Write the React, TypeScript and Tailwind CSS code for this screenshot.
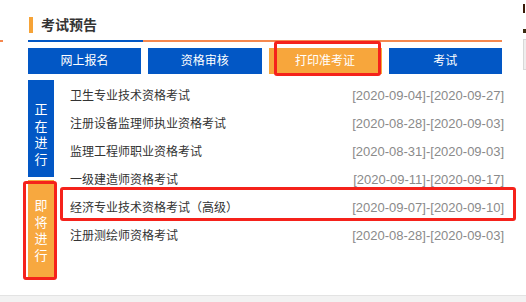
const tabs = ['网上报名', '资格审核', '打印准考证', '考试']

const exams = [
  { name: '卫生专业技术资格考试', date: '[2020-09-04]-[2020-09-27]' },
  { name: '注册设备监理师执业资格考试', date: '[2020-08-28]-[2020-09-03]' },
  { name: '监理工程师职业资格考试', date: '[2020-08-31]-[2020-09-03]' },
  { name: '一级建造师资格考试', date: '[2020-09-11]-[2020-09-17]' },
  { name: '经济专业技术资格考试（高级）', date: '[2020-09-07]-[2020-09-10]' },
  { name: '注册测绘师资格考试', date: '[2020-08-28]-[2020-09-03]' },
]

function VerticalTab({ label, color, pad }: { label: string; color: string; pad: string }) {
  return (
    <div className={`h-[97px] flex flex-col items-center ${color} ${pad}`}>
      {label.split('').map((ch, i) => (
        <span key={i} className="text-[13px] leading-[16.5px] text-white">
          {ch}
        </span>
      ))}
    </div>
  )
}

export default function App() {
  return (
    <div className="relative w-[526px] h-[302px] flex flex-col bg-white overflow-hidden font-['Liberation_Sans','Noto_Sans_CJK_SC',sans-serif]">
      <div className="pl-[28px] pr-[24px] pt-[17px]">
        {/* title */}
        <div className="flex items-center h-[16px]">
          <div className="ml-[1px] w-[4px] h-[16px] bg-[#f6a337]" />
          <span className="ml-[8px] text-[14px] leading-[16px] font-bold text-[#333]">考试预告</span>
        </div>
        <div className="mt-[7px] flex h-[2px]">
          <div className="w-[115px] bg-[#0257c5]" />
          <div className="flex-1 bg-[#f5884f]" />
        </div>

        {/* step buttons */}
        <div className="mt-[6px] grid grid-cols-4 gap-[7px]">
          {tabs.map((t, i) => (
            <div
              key={t}
              className={`h-[26px] flex items-center justify-center text-[12px] text-white ${
                i === 2 ? 'bg-[#f7a63c]' : 'bg-[#0257c5]'
              }`}
            >
              {t}
            </div>
          ))}
        </div>

        {/* list */}
        <div className="mt-[6px] flex">
          <div className="w-[26px] flex flex-col">
            <VerticalTab label="正在进行" color="bg-[#0257c5]" pad="pt-[22px]" />
            <div className="mt-[3px]">
              <VerticalTab label="即将进行" color="bg-[#f7a83f]" pad="pt-[18px]" />
            </div>
          </div>
          <div className="flex-1 pl-[16px] pt-[2px] -mr-[2px]">
            {exams.map((e) => (
              <div key={e.name} className="h-[28px] flex items-center justify-between">
                <span className="text-[12px] text-[#333]">{e.name}</span>
                <span className="text-[13px] text-[#8a8a8a]">{e.date}</span>
              </div>
            ))}
          </div>
        </div>
      </div>

      {/* bottom strip */}
      <div className="mt-auto h-[7px] border-t border-[#e3e3e3] bg-[#f2f2f2]" />

      {/* edge fragments */}
      <div className="absolute left-0 top-[40px] w-[3px] h-[2px] bg-[#f5884f]" />
      <div className="absolute left-[523px] top-[4px] w-[2px] h-[9px] bg-[#3a1a08]" />
      <div className="absolute left-[523px] top-[29px] w-[3px] h-[4px] bg-[#3a2a10]" />
      <div className="absolute left-[523px] top-[39px] w-[4px] h-[31px] border border-[#d8d8d8] bg-[#eeeeee]" />

      {/* red annotation boxes */}
      <div className="absolute left-[274px] top-[41px] w-[107px] h-[35px] border-[3px] border-[#f5221b] rounded-[3px]" />
      <div className="absolute left-[23px] top-[181px] w-[34px] h-[99px] border-[3px] border-[#f5221b] rounded-[3px]" />
      <div className="absolute left-[60px] top-[187px] w-[456px] h-[34px] border-[3px] border-[#f5221b] rounded-[3px]" />
    </div>
  )
}
